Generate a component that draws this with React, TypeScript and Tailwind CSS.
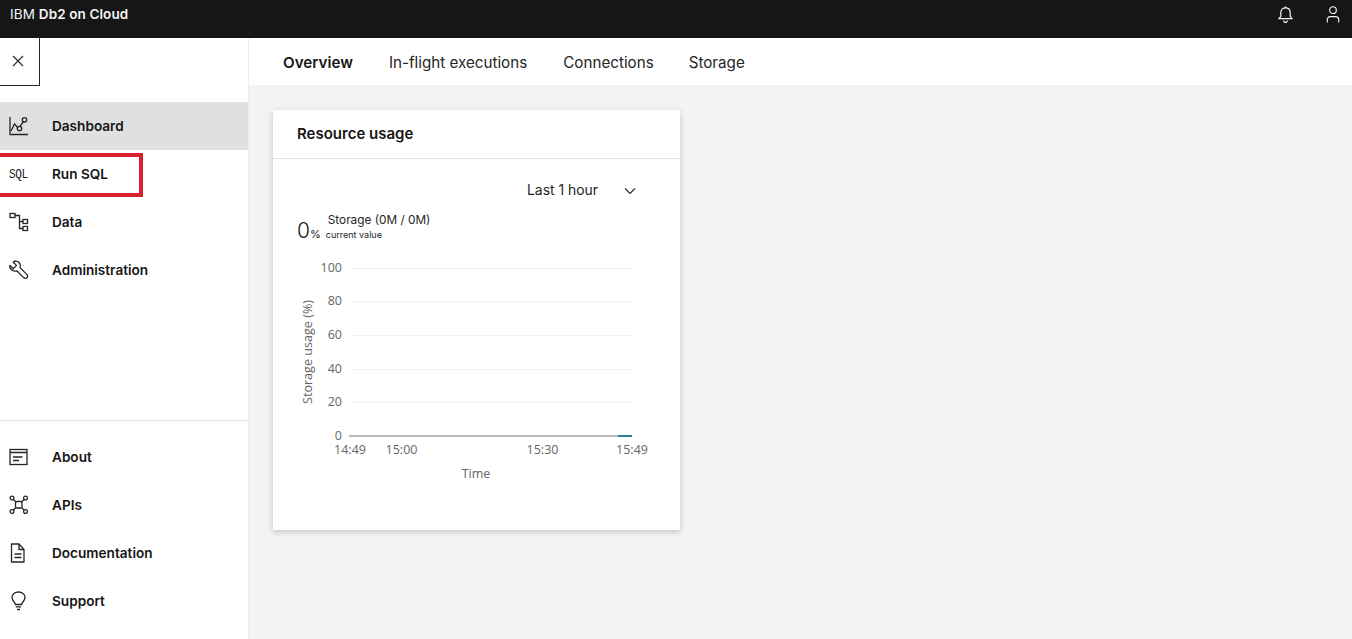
import React from "react";

const ic = { fill: "none", stroke: "#262626", strokeWidth: 1.3 };

const DashboardIcon = () => (
  <svg width="20" height="20" viewBox="0 0 20 20" {...ic}>
    <path d="M1 1v17.500h18" />
    <path d="M2 15l3.500-7 4 4.500 5-7" />
    <circle cx="10.500" cy="12.500" r="2.200" fill="#e0e0e0" />
    <circle cx="15.500" cy="3.800" r="2.200" fill="#e0e0e0" />
  </svg>
);
const DataIcon = () => (
  <svg width="20" height="20" viewBox="0 0 20 20" {...ic}>
    <rect x="1" y="1.500" width="5" height="4" />
    <rect x="14" y="7.500" width="4.500" height="4" />
    <rect x="14" y="14.500" width="4.500" height="4" />
    <path d="M6 3.500h4.500v13H14M10.500 9.500H14" />
  </svg>
);
const WrenchIcon = () => (
  <svg width="20" height="20" viewBox="0 0 20 20" {...ic} strokeLinejoin="round">
    <path d="M6.500 1l2.800 0.900c1.800 1.300 2.400 3.800 1.700 5.700l6.800 6.800c1 1 1 2.400.1 3.300-.9.900-2.300.8-3.300-.1l-6.800-6.800c-2 .7-4.300.1-5.700-1.500C1 8.800.6 7.300 1 5.500L4.200 8.700 7.500 5.400 4.300 2.200C5 1.500 5.700 1.200 6.500 1z" />
  </svg>
);
const AboutIcon = () => (
  <svg width="20" height="20" viewBox="0 0 20 20" {...ic}>
    <rect x="1" y="2.500" width="17" height="15" />
    <path d="M1 5.500h17M4 10h9.500M4 13.500h6" />
  </svg>
);
const ApiIcon = () => (
  <svg width="20" height="20" viewBox="0 0 20 20" {...ic}>
    <rect x="6.500" y="6.500" width="6.500" height="6.500" rx="1.500" />
    <path d="M4.200 4.200L7 7M15.300 4.200L12.500 7M4.200 15.300L7 12.500M15.300 15.300L12.500 12.500" />
    <circle cx="3" cy="3" r="1.900" />
    <circle cx="16.500" cy="3" r="1.900" />
    <circle cx="3" cy="16.500" r="1.900" />
    <circle cx="16.500" cy="16.500" r="1.900" />
  </svg>
);
const DocIcon = () => (
  <svg width="20" height="20" viewBox="0 0 20 20" {...ic} className="-translate-x-[1px]">
    <path d="M3.500 1h7.500l5 5.500V19h-12.500z" strokeLinejoin="round" />
    <path d="M11 1v5.500h5M6.500 11h7M6.500 14.500h7" />
  </svg>
);
const BulbIcon = () => (
  <svg width="20" height="20" viewBox="0 0 20 20" {...ic}>
    <path d="M6.500 13.500c-.3-2-3.500-3.800-3.500-7C3 3.200 6 1 9.500 1S16 3.200 16 6.500c0 3.200-3.200 5-3.500 7z" />
    <path d="M6.800 15.800h5.400M8 18.500h3" />
  </svg>
);
const SqlIcon = () => (
  <span className="block w-5 translate-y-[1px] scale-y-110 font-['Liberation_Mono',monospace] text-[11px] leading-none tracking-[-0.4px] text-[#161616]">
    SQL
  </span>
);

const Row = ({ icon, label, active }: { icon: React.ReactNode; label: string; active?: boolean }) => (
  <div className={`flex h-12 items-center pl-[9px] ${active ? "bg-[#e0e0e0]" : ""}`}>
    <span className="flex w-[43px] shrink-0 items-center">{icon}</span>
    <span className="text-[13.600px] font-semibold leading-[18px] text-[#161616]">{label}</span>
  </div>
);

const yTicks = [
  { v: "100", y: 13 },
  { v: "80", y: 46 },
  { v: "60", y: 80 },
  { v: "40", y: 114 },
  { v: "20", y: 147 },
];

const Chart = () => (
  <svg width="407" height="235" viewBox="0 0 407 235" className="block" fontFamily="'Open Sans', sans-serif" fontSize="12.500" fill="#666">
    {yTicks.map((t) => (
      <g key={t.v}>
        <line x1="77" x2="359" y1={t.y + 0.5} y2={t.y + 0.5} stroke="#f0f0f0" />
        <text x="69" y={t.y + 3.5} textAnchor="end">{t.v}</text>
      </g>
    ))}
    <text x="69" y="185" textAnchor="end">0</text>
    <line x1="76" x2="359" y1="181" y2="181" stroke="#bdbdbd" strokeWidth="2" />
    <line x1="345" x2="359" y1="181" y2="181" stroke="#2f7f9f" strokeWidth="2" />
    <text x="77" y="199" textAnchor="middle">14:49</text>
    <text x="128.500" y="199" textAnchor="middle">15:00</text>
    <text x="269.500" y="199" textAnchor="middle">15:30</text>
    <text x="359" y="199" textAnchor="middle">15:49</text>
    <text x="203" y="222.500" textAnchor="middle">Time</text>
    <text transform="translate(39 97) rotate(-90)" textAnchor="middle" fontSize="12.600">Storage usage (%)</text>
  </svg>
);

export default function App() {
  return (
    <div className="flex h-[639px] w-[1352px] flex-col overflow-hidden bg-[#f3f3f3] font-['Inter','Noto_Sans',sans-serif] text-[#161616]">
      <header className="flex h-[38px] shrink-0 items-center justify-between bg-[#161616] pb-[9px] pl-[10px] pr-[12px] text-[13.500px] text-[#f4f4f4]">
        <div className="whitespace-nowrap tracking-[0.1px]">
          IBM <span className="font-semibold">Db2 on Cloud</span>
        </div>
        <div className="flex items-center gap-[33px]">
          <svg width="15" height="17" viewBox="0 0 16 18" fill="none" stroke="#f4f4f4" strokeWidth="1.300">
            <path d="M1 13.500l2-2.500V7c0-3 2-5 5-5s5 2 5 5v4l2 2.500z" />
            <path d="M8 .5v1.500M6 15.500c0 1.200.9 2 2 2s2-.8 2-2" />
          </svg>
          <svg width="14" height="19" viewBox="0 0 16 20" fill="none" stroke="#f4f4f4" strokeWidth="1.300">
            <circle cx="8" cy="5" r="3.800" />
            <path d="M1.500 19v-3c0-2.200 1.500-3.500 3.500-3.500h6c2 0 3.500 1.300 3.500 3.500v3" />
          </svg>
        </div>
      </header>

      <div className="flex min-h-0 flex-1">
        <aside className="relative flex w-[249px] shrink-0 flex-col justify-between border-r border-[#ededed] bg-white">
          <div>
            <button className="flex h-[48px] w-[40px] items-center justify-center border-b border-r border-[#262626] pb-[1px] pr-[3px]">
              <svg width="12" height="12" viewBox="0 0 12 12" stroke="#262626" strokeWidth="1.100">
                <path d="M1 1l10 10M11 1L1 11" />
              </svg>
            </button>
            <nav className="mt-4">
              <Row icon={<DashboardIcon />} label="Dashboard" active />
              <Row icon={<SqlIcon />} label="Run SQL" />
              <Row icon={<DataIcon />} label="Data" />
              <Row icon={<WrenchIcon />} label="Administration" />
            </nav>
          </div>
          <div className="border-t border-[#e0e0e0] pb-[14px] pt-3">
            <Row icon={<AboutIcon />} label="About" />
            <Row icon={<ApiIcon />} label="APIs" />
            <Row icon={<DocIcon />} label="Documentation" />
            <Row icon={<BulbIcon />} label="Support" />
          </div>
          <div className="pointer-events-none absolute left-[-4px] top-[115px] h-[44px] w-[147px] border-4 border-[#d9202f]" />
        </aside>

        <main className="min-w-0 flex-1">
          <div className="flex h-[47px] items-center bg-white pl-[34px] pt-1 text-[15.200px] text-[#262626]">
            <span className="mr-9 font-semibold text-[#161616]">Overview</span>
            <span className="mr-9">In-flight executions</span>
            <span className="mr-[35px]">Connections</span>
            <span>Storage</span>
          </div>
          <section className="ml-6 mt-[25px] h-[420px] w-[407px] bg-white shadow-[0_2px_6px_rgba(0,0,0,0.2)]">
            <div className="flex h-[49px] items-center border-b border-[#e0e0e0] pl-6 text-[15px] font-semibold text-[#161616]">
              Resource usage
            </div>
            <div className="flex h-[42px] items-end justify-end pr-[44px] text-[13.900px] text-[#262626]">
              <span>Last 1 hour</span>
              <svg width="12" height="8" viewBox="0 0 12 8" fill="none" stroke="#262626" strokeWidth="1.100" className="mb-[6px] ml-[26px]">
                <path d="M1 1.500l5 5 5-5" />
              </svg>
            </div>
            <div className="flex pl-6 pt-[11px]">
              <div className="mt-[6px] flex items-end leading-none">
                <span className="text-[21px] font-light">0</span>
                <span className="mb-[1px] text-[11px]">%</span>
              </div>
              <div className="ml-[5px]">
                <div className="ml-[2px] text-[11.800px] leading-[16px] text-[#262626]">Storage (0M / 0M)</div>
                <div className="text-[9px] leading-[13px] text-[#262626]">current value</div>
              </div>
            </div>
            <div className="mt-[14px]">
              <Chart />
            </div>
          </section>
        </main>
      </div>
    </div>
  );
}
